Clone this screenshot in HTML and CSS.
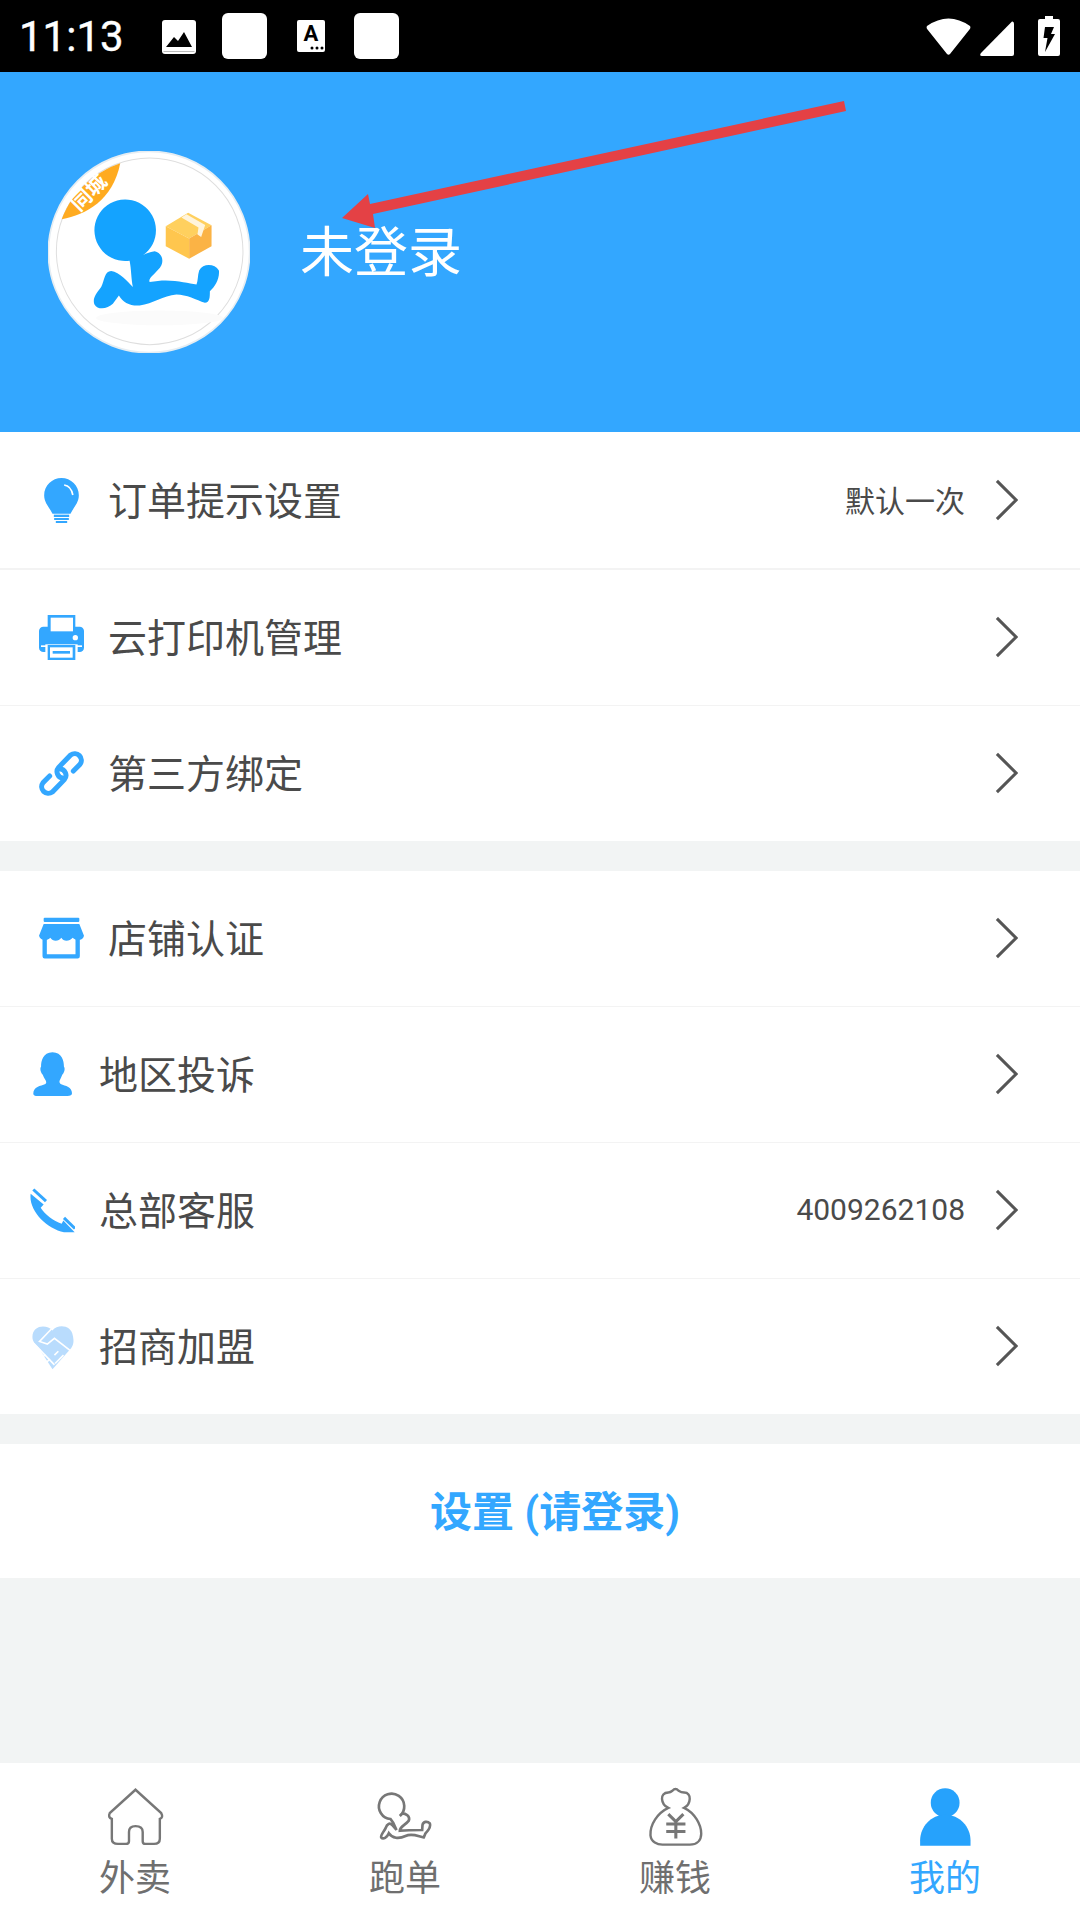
FILE: index.html
```html
<!DOCTYPE html>
<html lang="zh-CN">
<head>
    <meta charset="UTF-8">
    <meta name="viewport" content="width=device-width, initial-scale=1.0">
    <title>我的</title>
    <link rel="stylesheet" href="styles.css">
</head>
<body>
    <div class="status-bar">
        <span class="clock">11:13</span>
        <svg class="st-image" viewBox="0 0 34 34"><rect width="34" height="34" rx="3" fill="#fff"/><path d="M4 27 L12 17 L16 21 L22 12 L30 27Z" fill="#000"/><rect x="1.5" y="31" width="31" height="1" fill="#bbb"/></svg>
        <div class="st-blank"></div>
        <svg class="st-font" viewBox="0 0 28 32"><rect width="28" height="32" rx="2" fill="#fff"/><text x="14" y="21" text-anchor="middle" class="st-letter">A</text><circle cx="15" cy="28" r="1.5"/><circle cx="20" cy="28" r="1.5"/><circle cx="25" cy="28" r="1.5"/></svg>
        <div class="st-blank st-blank-last"></div>
        <svg class="st-wifi" viewBox="0 0 45 38"><path d="M1 9 Q22.5 -6 44 9 Q45 11 43.5 12.5 L24 37 Q22.5 38.5 21 37 L1.5 12.5 Q0 11 1 9Z" fill="#fff"/></svg>
        <svg class="st-signal" viewBox="0 0 34 35"><path d="M32 0.500 Q34 0 34 3 V33 Q34 35 32 35 H2 Q-1 35 1 32Z" fill="#fff"/></svg>
        <svg class="st-battery" viewBox="0 0 22 40"><path d="M7 0 H15 V3 H20 Q22 3 22 5 V38 Q22 40 20 40 H2 Q0 40 0 38 V5 Q0 3 2 3 H7Z" fill="#fff"/><path d="M7 11 H16 L13 18 H17 L7 36 L9.500 22 H5.500Z" fill="#000"/></svg>
    </div>

    <div class="header">
        <svg class="avatar" viewBox="56 33 604 604">
            <circle cx="358" cy="335" r="301" fill="#fff" stroke="#e6edf2" stroke-width="5"/>
            <circle cx="360" cy="333" r="279" fill="#fff" stroke="#dedede" stroke-width="3"/>
            <path d="M272 70 C200 95 130 150 97 237 C170 225 250 180 272 70Z" fill="#ffab20"/>
            <text x="0" y="0" class="ribbon-text" transform="translate(193 172) rotate(-45)" text-anchor="middle">同城</text>
            <ellipse cx="390" cy="532" rx="190" ry="22" fill="#fbfbfb"/>
            <path d="M300 361 C305 385 305 420 310 440 C295 425 270 395 245 392 C225 392 225 420 215 440 C200 460 188 475 195 492 C205 510 235 505 250 490 L268 465 C280 485 300 497 330 495 C370 490 400 465 440 462 C470 462 500 478 525 487 C540 485 540 470 540 452 C555 440 570 415 567 390 C555 370 520 368 508 390 C503 405 505 420 500 432 C470 428 420 412 360 425 C355 415 370 405 385 388 C405 370 402 340 375 333 C360 335 347 340 340 345 A92 92 0 1 0 300 361Z" fill="#14a3ff"/>
            <path d="M408 258 L475 218 L545 255 L478 295Z" fill="#ffd05e"/>
            <path d="M408 258 L478 295 V355 L408 318Z" fill="#ffc64e"/>
            <path d="M478 295 L545 255 V318 L478 355Z" fill="#fbb345"/>
            <path d="M455 232 L470 222 L526 254 L514 290 L503 283 L506 262Z" fill="#fff4dc"/>
        </svg>
        <span class="user-name">未登录</span>
        <svg class="arrow" viewBox="0 72 1080 360">
            <path d="M844 101 L846 111 L373 214 L375 228 L342 218 L368 194 L370 204Z" fill="#e44145"/>
        </svg>
    </div>

    <div class="group">
        <div class="row row-first">
            <div class="row-icon">
                <svg width="35" height="45" viewBox="133 83 104 135"><path d="M185 83 C213 83 237 106 237 135 C237 158 222 170 212 190 H158 C148 170 133 158 133 135 C133 106 157 83 185 83Z" fill="#33a7ff"/><path d="M193 104 C207 106 216 118 219 134" fill="none" stroke="#fff" stroke-width="5"/><rect x="162" y="193" width="46" height="7" fill="#33a7ff"/><rect x="163" y="203" width="44" height="6" fill="#33a7ff"/><rect x="168" y="212" width="34" height="6" fill="#33a7ff"/></svg>
            </div>
            <span class="row-title">订单提示设置</span>
            <span class="row-value">默认一次</span>
            <svg class="chevron" viewBox="0 0 24 44"><path d="M2 2 L22 22 L2 42" /></svg>
        </div>
        <div class="row">
            <div class="row-icon">
                <svg width="45" height="45" viewBox="117 495 135 135"><rect x="143" y="495" width="83" height="53" fill="#33a7ff"/><rect x="117" y="530" width="135" height="76" rx="13" fill="#33a7ff"/><rect x="152" y="503" width="67" height="41" fill="#fff"/><rect x="123" y="586" width="123" height="5" fill="#fff"/><circle cx="226" cy="563" r="8" fill="#fff"/><rect x="136" y="583" width="97" height="47" fill="#fff"/><rect x="143" y="585" width="83" height="45" fill="#33a7ff"/><rect x="150" y="592" width="68" height="31" fill="#fff"/><rect x="158" y="603" width="52" height="8" fill="#33a7ff"/></svg>
            </div>
            <span class="row-title">云打印机管理</span>
            <svg class="chevron" viewBox="0 0 24 44"><path d="M2 2 L22 22 L2 42" /></svg>
        </div>
        <div class="row">
            <div class="row-icon">
                <svg width="45" height="45" viewBox="117 903 135 135"><g fill="none" stroke="#33a7ff" stroke-width="15" stroke-linecap="round"><path d="M190 985 A20 20 0 0 1 176 952 L212 915 A20 20 0 0 1 240 943 L220 963"/><path d="M179 956 A20 20 0 0 1 193 989 L157 1026 A20 20 0 0 1 129 998 L149 978"/></g></svg>
            </div>
            <span class="row-title">第三方绑定</span>
            <svg class="chevron" viewBox="0 0 24 44"><path d="M2 2 L22 22 L2 42" /></svg>
        </div>
    </div>

    <div class="group">
        <div class="row row-store">
            <div class="row-icon">
                <svg width="45" height="43" viewBox="117 110 135 125"><rect x="131" y="110" width="107" height="13" rx="3" fill="#33a7ff"/><path d="M131 129 H238 L252 164 C250 178 230 182 218 170 C208 182 190 182 184 170 C176 182 158 182 151 170 C140 182 120 178 117 164Z" fill="#33a7ff"/><path d="M134 170 V226 H233 V170" fill="none" stroke="#33a7ff" stroke-width="13" stroke-linejoin="round"/></svg>
            </div>
            <span class="row-title">店铺认证</span>
            <svg class="chevron" viewBox="0 0 24 44"><path d="M2 2 L22 22 L2 42" /></svg>
        </div>
        <div class="row row-narrow">
            <div class="row-icon">
                <svg width="39" height="45" viewBox="98 498 116 132"><path d="M156 498 C185 498 190 525 190 540 C195 548 190 560 185 565 C180 580 172 585 180 592 C195 598 214 600 214 620 Q214 628 200 628 H112 Q98 628 99 620 C99 600 120 598 135 592 C142 585 132 580 127 565 C122 560 117 548 122 540 C122 525 127 498 156 498Z" fill="#33a7ff"/></svg>
            </div>
            <span class="row-title">地区投诉</span>
            <svg class="chevron" viewBox="0 0 24 44"><path d="M2 2 L22 22 L2 42" /></svg>
        </div>
        <div class="row row-narrow">
            <div class="row-icon">
                <svg width="45" height="45" viewBox="90 895 135 130"><path d="M92 910 L131 942 L122 952 C135 972 160 992 185 1000 L190 990 L224 1025 H192 C140 1015 85 960 92 910Z" fill="#33a7ff"/><path d="M100 897 L138 932" stroke="#33a7ff" stroke-width="9" fill="none"/><path d="M192 982 L225 1014" stroke="#33a7ff" stroke-width="9" fill="none"/></svg>
            </div>
            <span class="row-title">总部客服</span>
            <span class="row-value">4009262108</span>
            <svg class="chevron" viewBox="0 0 24 44"><path d="M2 2 L22 22 L2 42" /></svg>
        </div>
        <div class="row row-narrow">
            <div class="row-icon">
                <svg width="45" height="46" viewBox="36 38 132 142"><path d="M102 58 C85 38 40 40 40 78 C40 92 50 102 58 110 L102 178 L160 112 C168 100 168 90 165 75 C160 40 118 38 102 58Z" fill="#b9dcfd"/><g fill="none" stroke="#fff" stroke-width="5"><path d="M100 52 L62 92 L86 100 L108 82 L162 124"/><path d="M44 98 L108 164"/><path d="M66 118 L50 134"/><path d="M80 132 L62 150"/><path d="M94 146 L78 162"/><path d="M110 160 L136 134"/><path d="M120 122 L108 134"/></g></svg>
            </div>
            <span class="row-title">招商加盟</span>
            <svg class="chevron" viewBox="0 0 24 44"><path d="M2 2 L22 22 L2 42" /></svg>
        </div>
    </div>

    <div class="login-row">设置 (请登录)</div>

    <div class="tab-bar">
        <div class="tab">
            <svg class="tab-icon" viewBox="306 114 170 175"><path class="tab-line" d="M391 122 L466 190 Q473 203 462 207 V265 Q462 280 445 280 H420 Q412 280 412 272 V245 Q412 228 391 228 Q372 228 372 245 V272 Q372 280 362 280 H340 Q322 280 322 265 V207 Q310 203 316 190Z"/></svg>
            <span>外卖</span>
        </div>
        <div class="tab">
            <svg class="tab-icon" viewBox="46.500 21 177 180"><path class="tab-line tab-man" d="M90 117 L98 128 L108 150 L95 135 C88 128 80 130 75 145 C70 155 60 165 62 172 C68 180 80 172 85 160 C95 175 115 178 135 168 C155 158 175 170 190 172 L195 160 C205 150 212 140 208 130 C200 122 188 125 186 135 L185 150 C165 150 140 150 118 152 C118 140 135 135 145 122 C150 108 135 100 125 100 L118 108 A38 38 0 1 0 90 117Z"/></svg>
            <span>跑单</span>
        </div>
        <div class="tab">
            <svg class="tab-icon" viewBox="308 114 170 175"><path class="tab-line" d="M372 175 C350 165 345 130 372 130 Q378 130 384 125 Q393 115 402 125 Q410 130 418 130 C442 130 438 165 418 175 C450 190 468 225 468 250 C468 270 455 282 435 282 H355 C340 282 322 275 320 255 C318 225 340 190 372 175Z"/><path class="tab-yen" d="M372 193 L394 215 L416 193 M394 215 V264 M366 222 H422 M366 244 H422"/></svg>
            <span>赚钱</span>
        </div>
        <div class="tab tab-active">
            <svg class="tab-icon" viewBox="1092 114 170 175"><circle cx="1176" cy="160" r="42" fill="#26a2fc"/><path d="M1103 285 V270 C1103 230 1135 195 1176 195 C1218 195 1250 230 1250 270 V285Z" fill="#26a2fc"/></svg>
            <span>我的</span>
        </div>
    </div>
</body>
</html>
```

FILE: styles.css
```css
body {
    font-family: Roboto, "Noto Sans CJK SC", sans-serif;
    background-color: #f2f4f4;
    margin: 0;
    padding: 0;
    width: 1080px;
    height: 1920px;
    overflow: hidden;
    display: flex;
    flex-direction: column;
}

.status-bar {
    height: 72px;
    background-color: #000;
    display: flex;
    align-items: center;
    padding-left: 19px;
    flex-shrink: 0;
}

.clock {
    color: #fff;
    font-size: 42px;
    width: 143px;
    -webkit-text-stroke: 0.4px #fff;
}

.st-image {
    width: 34px;
    height: 34px;
    margin-top: 2px;
}

.st-blank {
    width: 45px;
    height: 46px;
    background-color: #fff;
    border-radius: 6px;
    margin-left: 26px;
    margin-right: 30px;
}

.st-blank-last {
    margin-left: 29px;
    margin-right: 527px;
}

.st-font {
    width: 28px;
    height: 32px;
}

.st-letter {
    font-size: 22px;
    font-weight: bold;
}

.st-wifi {
    width: 45px;
    height: 38px;
}

.st-signal {
    width: 34px;
    height: 35px;
    margin-left: 9px;
    margin-top: 4px;
}

.st-battery {
    width: 22px;
    height: 40px;
    margin-left: 24px;
}

.header {
    position: relative;
    height: 360px;
    background-color: #33a7ff;
    display: flex;
    align-items: center;
    padding-left: 48px;
    flex-shrink: 0;
}

.avatar {
    width: 202px;
    height: 202px;
    margin-right: 50px;
}

.ribbon-text {
    fill: #fff;
    font-size: 62px;
    font-weight: bold;
}

.user-name {
    color: #fff;
    font-size: 54px;
    padding-bottom: 7px;
}

.arrow {
    position: absolute;
    left: 0;
    top: 0;
    width: 1080px;
    height: 360px;
}

.group {
    background-color: #fff;
    margin-bottom: 30px;
    flex-shrink: 0;
}

.row {
    box-sizing: border-box;
    height: 136px;
    display: flex;
    align-items: center;
    padding-left: 39px;
    padding-right: 62px;
    border-bottom: 1px solid #f3f3f3;
}

.row-first {
    height: 138px;
    border-bottom-width: 2px;
}

.row:last-child {
    height: 135px;
    border-bottom: none;
}

.row-store {
    padding-left: 39px;
}

.row-store .row-icon {
    margin-right: 24px;
}

.row-narrow {
    padding-left: 30px;
}

.row-narrow .row-icon {
    margin-right: 24px;
}

.row-icon {
    width: 45px;
    margin-right: 24px;
    display: flex;
    justify-content: center;
    align-items: center;
}

.row-icon svg {
    display: block;
}

.row-title {
    font-size: 39px;
    color: #4a4a4a;
    flex: 1;
    padding-bottom: 5px;
}

.row-value {
    font-size: 30px;
    color: #4a4a4a;
    margin-right: 30px;
    padding-bottom: 2px;
}

.chevron {
    width: 23px;
    height: 44px;
    margin-bottom: 2px;
    fill: none;
    stroke: #555;
    stroke-width: 3.200;
}

.row-first .chevron {
    margin-bottom: 0;
}

.login-row {
    box-sizing: border-box;
    height: 134px;
    background-color: #fff;
    color: #33a7ff;
    font-size: 42px;
    font-weight: bold;
    display: flex;
    justify-content: center;
    align-items: center;
    padding-left: 30px;
    padding-bottom: 5px;
    flex-shrink: 0;
}

.tab-bar {
    margin-top: auto;
    height: 157px;
    background-color: #fff;
    display: flex;
    flex-shrink: 0;
}

.tab {
    flex: 1;
    display: flex;
    flex-direction: column;
    align-items: center;
    padding-top: 24px;
    font-size: 36px;
    line-height: 36px;
    color: #6f6f6f;
}

.tab-active {
    color: #33a7ff;
}

.tab-icon {
    width: 59px;
    height: 60px;
    margin-bottom: 14px;
}

.tab-line {
    fill: none;
    stroke: #777;
    stroke-width: 7;
}

.tab-man {
    stroke-width: 8;
}

.tab-yen {
    fill: none;
    stroke: #777;
    stroke-width: 9;
}
```
